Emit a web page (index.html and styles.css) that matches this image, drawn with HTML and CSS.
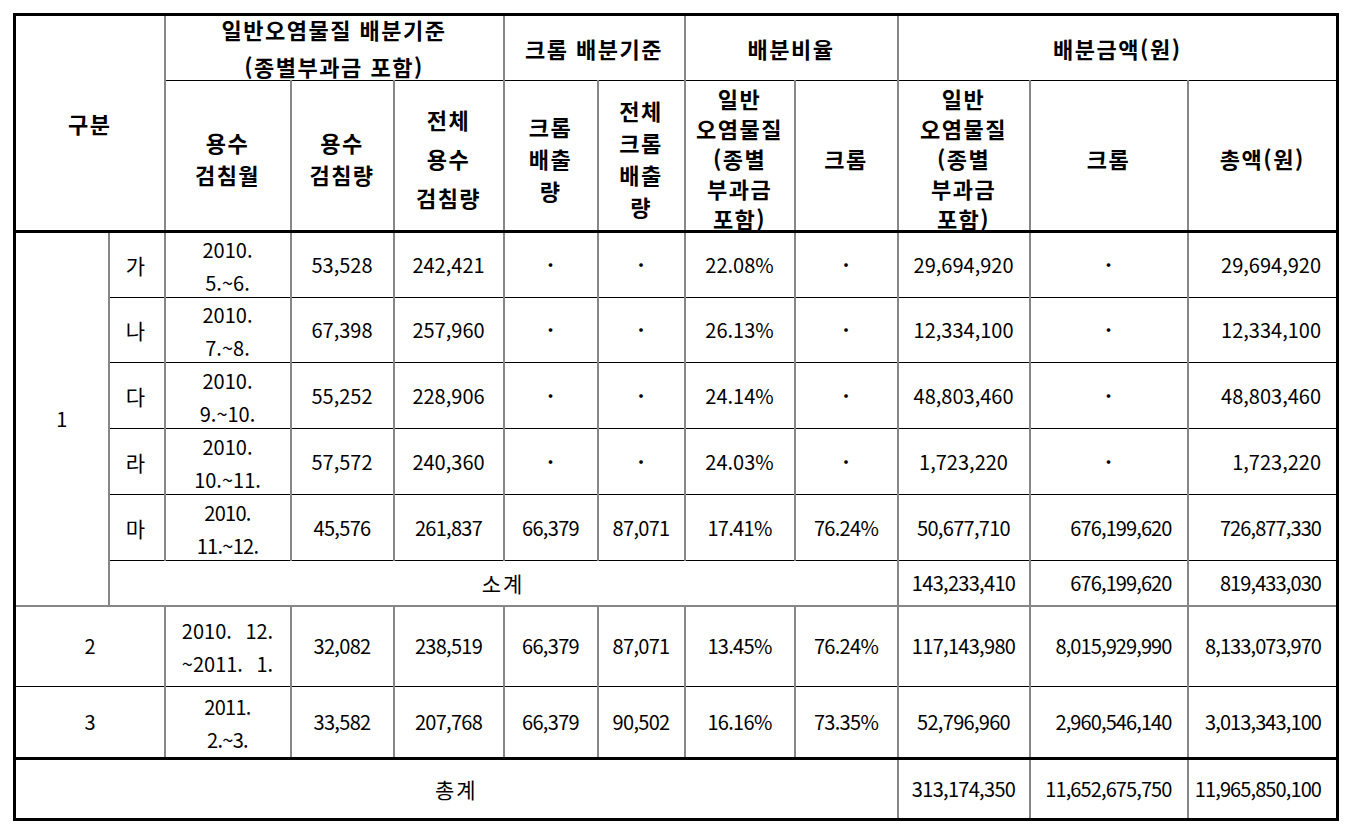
FILE: index.html
```html
<!DOCTYPE html>
<html lang="ko">
<head>
<meta charset="utf-8">
<title>배분금액</title>
<link rel="stylesheet" href="styles.css">
</head>
<body>
<table class="tbl">
  <colgroup>
    <col class="c1"><col class="c2"><col class="c3"><col class="c4"><col class="c5"><col class="c6">
    <col class="c7"><col class="c8"><col class="c9"><col class="c10"><col class="c11"><col class="c12">
  </colgroup>
  <thead>
    <tr class="rh1">
      <th colspan="2" rowspan="2" class="hb">구분</th>
      <th colspan="3" class="gb"><span class="tall">일반오염물질 배분기준<br>(종별부과금 포함)</span></th>
      <th colspan="2">크롬 배분기준</th>
      <th colspan="2" class="gb">배분비율</th>
      <th colspan="3">배분금액(원)</th>
    </tr>
    <tr class="rh2">
      <th class="hb"><span class="hl">용수<br>검침월</span></th>
      <th class="hb"><span class="hl">용수<br>검침량</span></th>
      <th class="hb gb"><span class="hl lh39">전체<br>용수<br>검침량</span></th>
      <th class="hb"><span class="hl">크롬<br>배출<br>량</span></th>
      <th class="hb"><span class="hl">전체<br>크롬<br>배출<br>량</span></th>
      <th class="hb"><span class="hl lh30">일반<br>오염물질<br>(종별<br>부과금<br>포함)</span></th>
      <th class="hb gb"><span class="hl">크롬</span></th>
      <th class="hb"><span class="hl lh30">일반<br>오염물질<br>(종별<br>부과금<br>포함)</span></th>
      <th class="hb"><span class="hl">크롬</span></th>
      <th class="hb"><span class="hl">총액(원)</span></th>
    </tr>
  </thead>
  <tbody>
    <tr class="r66">
      <td rowspan="6" class="sb">1</td>
      <td class="ko">가</td>
      <td><span class="ml">2010.<br>5.~6.</span></td>
      <td>53,528</td>
      <td class="gb">242,421</td>
      <td class="dot">·</td>
      <td class="dot">·</td>
      <td>22.08%</td>
      <td class="dot gb">·</td>
      <td>29,694,920</td>
      <td class="dot">·</td>
      <td class="amt">29,694,920</td>
    </tr>
    <tr class="r65">
      <td class="ko">나</td>
      <td><span class="ml">2010.<br>7.~8.</span></td>
      <td>67,398</td>
      <td class="gb">257,960</td>
      <td class="dot">·</td>
      <td class="dot">·</td>
      <td>26.13%</td>
      <td class="dot gb">·</td>
      <td>12,334,100</td>
      <td class="dot">·</td>
      <td class="amt">12,334,100</td>
    </tr>
    <tr class="r66">
      <td class="ko">다</td>
      <td><span class="ml">2010.<br>9.~10.</span></td>
      <td>55,252</td>
      <td class="gb">228,906</td>
      <td class="dot">·</td>
      <td class="dot">·</td>
      <td>24.14%</td>
      <td class="dot gb">·</td>
      <td>48,803,460</td>
      <td class="dot">·</td>
      <td class="amt">48,803,460</td>
    </tr>
    <tr class="r66">
      <td class="ko">라</td>
      <td><span class="ml">2010.<br>10.~11.</span></td>
      <td>57,572</td>
      <td class="gb">240,360</td>
      <td class="dot">·</td>
      <td class="dot">·</td>
      <td>24.03%</td>
      <td class="dot gb">·</td>
      <td>1,723,220</td>
      <td class="dot">·</td>
      <td class="amt">1,723,220</td>
    </tr>
    <tr class="r66 cond">
      <td class="ko">마</td>
      <td><span class="ml">2010.<br>11.~12.</span></td>
      <td>45,576</td>
      <td class="gb">261,837</td>
      <td>66,379</td>
      <td>87,071</td>
      <td>17.41%</td>
      <td class="gb">76.24%</td>
      <td>50,677,710</td>
      <td class="amt">676,199,620</td>
      <td class="amt">726,877,330</td>
    </tr>
    <tr class="r45 cond">
      <td colspan="8" class="ko sb gb">소계</td>
      <td class="sb">143,233,410</td>
      <td class="amt sb">676,199,620</td>
      <td class="amt sb">819,433,030</td>
    </tr>
    <tr class="r81 cond">
      <td colspan="2">2</td>
      <td class="wide"><span class="ml">2010. 12.<br>~2011. 1.</span></td>
      <td>32,082</td>
      <td class="gb">238,519</td>
      <td>66,379</td>
      <td>87,071</td>
      <td>13.45%</td>
      <td class="gb">76.24%</td>
      <td>117,143,980</td>
      <td class="amt">8,015,929,990</td>
      <td class="amt">8,133,073,970</td>
    </tr>
    <tr class="r72 cond">
      <td colspan="2">3</td>
      <td><span class="ml">2011.<br>2.~3.</span></td>
      <td>33,582</td>
      <td class="gb">207,768</td>
      <td>66,379</td>
      <td>90,502</td>
      <td>16.16%</td>
      <td class="gb">73.35%</td>
      <td>52,796,960</td>
      <td class="amt">2,960,546,140</td>
      <td class="amt">3,013,343,100</td>
    </tr>
    <tr class="r61 cond total">
      <td colspan="9" class="ko gb">총계</td>
      <td>313,174,350</td>
      <td class="amt">11,652,675,750</td>
      <td class="amt">11,965,850,100</td>
    </tr>
  </tbody>
</table>
</body>
</html>
```
FILE: styles.css
```css
html, body {
  margin: 0;
  padding: 0;
  background: #ffffff;
}

body {
  font-family: "Noto Sans CJK KR", "Malgun Gothic", sans-serif;
  color: #000000;
}

.tbl {
  border-collapse: collapse;
  table-layout: fixed;
  width: 1325px;
  margin: 13px 0 0 13px;
  border: 3px solid #000000;
}

.c1 { width: 94px; }
.c2 { width: 56px; }
.c3 { width: 126px; }
.c4 { width: 103px; }
.c5 { width: 110px; }
.c6 { width: 94px; }
.c7 { width: 87px; }
.c8 { width: 110px; }
.c9 { width: 103px; }
.c10 { width: 132px; }
.c11 { width: 158px; }
.c12 { width: 150px; }

.tbl th,
.tbl td {
  border-left: 2px solid #878787;
  border-right: 2px solid #878787;
  border-top: 1px solid #000000;
  border-bottom: 1px solid #000000;
  padding: 0;
  text-align: center;
  vertical-align: middle;
  font-size: 20px;
  line-height: 30px;
  font-weight: 400;
  white-space: nowrap;
}

.tbl th {
  font-size: 22px;
  font-weight: 700;
  letter-spacing: 1.5px;
}

.tall {
  display: block;
  line-height: 37px;
  margin: -5px 0 -5px 0;
}

.hl {
  display: block;
  line-height: 32px;
  margin: -8px 0 -13px 0;
}

.hl.lh39 { line-height: 39px; }
.hl.lh30 { line-height: 30px; }

.ml {
  display: block;
  line-height: 33px;
  margin: -5px 0 -7px 0;
}

.tbl th.hb { border-bottom: 3px solid #000000; }

.tbl .gb { border-right: 1px solid #000000; }

.rh1 { height: 65px; }
.rh2 { height: 151px; }
.r66 { height: 66px; }
.r65 { height: 65px; }
.r45 { height: 45px; }
.r81 { height: 81px; }
.r72 { height: 72px; }
.r61 { height: 61px; }

.tbl td.ko {
  font-size: 21px;
  letter-spacing: 2px;
}

.tbl td.dot { font-weight: 700; }

.tbl td.amt {
  text-align: right;
  padding-right: 15px;
}

.cond td { letter-spacing: -0.7px; }
.cond td.ko { letter-spacing: 2px; }
.cond td.amt { letter-spacing: -0.9px; }

.tbl td.wide {
  letter-spacing: 0;
  word-spacing: 8px;
}

.tbl td.sb { border-bottom: 2px solid #878787; }

.total td { border-top: 3px solid #000000; }
```
